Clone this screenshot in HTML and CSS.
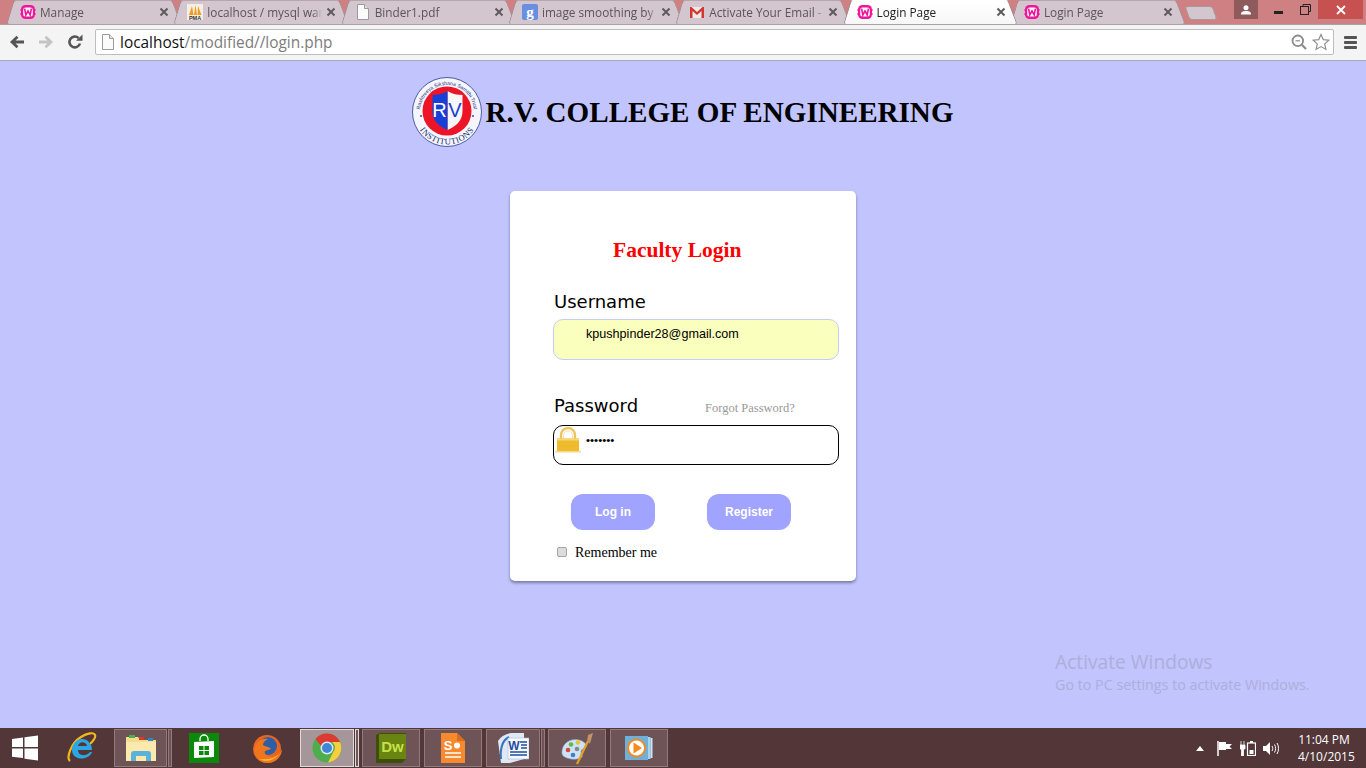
FILE: index.html
```html
<!DOCTYPE html>
<html lang="en">
<head>
<meta charset="utf-8">
<title>Login Page</title>
<link rel="stylesheet" href="styles.css">
</head>
<body>
<svg class="defs" width="0" height="0" aria-hidden="true">
  <symbol id="wamp" viewBox="0 0 16 16">
    <rect x="1" y="1" width="14" height="14" rx="4.5" fill="#f0169a"/>
    <rect x="3.2" y="3.4" width="9.6" height="9.2" rx="2.5" fill="#fff"/>
    <path d="M4.6 4.6 L5.8 11 L8 7 L10.2 11 L11.4 4.6" fill="none" stroke="#f0169a" stroke-width="1.6"/>
    <path d="M0 6h2M0 10h2M14 6h2M14 10h2" stroke="#f0169a" stroke-width="1"/>
  </symbol>
  <symbol id="doc" viewBox="0 0 14 16">
    <path d="M1.5 .5h7l4 4v11h-11z" fill="#fbfbfb" stroke="#9b9b9b"/>
    <path d="M8.5 .5v4h4" fill="#e4e4e4" stroke="#9b9b9b"/>
  </symbol>
  <symbol id="close" viewBox="0 0 10 10">
    <path d="M1.5 1.5l7 7M8.5 1.5l-7 7" stroke="#5f5a5e" stroke-width="2"/>
  </symbol>
</svg>

<div class="browser">
  <header class="tabstrip">
    <div class="tab">
      <svg class="favicon"><use href="#wamp"/></svg>
      <span class="tab-label">Manage</span>
      <svg class="tab-close"><use href="#close"/></svg>
    </div>
    <div class="tab">
      <svg class="favicon" viewBox="0 0 16 16">
        <rect width="16" height="16" fill="#f3efe6"/>
        <path d="M2 11L5 2l1.500 9zM7 11L8.500 1 10 11zM10.500 11L11 2l3.500 9z" fill="#f29a1c"/>
        <text x="8" y="15.600" class="pma-text">PMA</text>
      </svg>
      <span class="tab-label">localhost / mysql wan</span>
      <svg class="tab-close"><use href="#close"/></svg>
    </div>
    <div class="tab">
      <svg class="favicon"><use href="#doc"/></svg>
      <span class="tab-label">Binder1.pdf</span>
      <svg class="tab-close"><use href="#close"/></svg>
    </div>
    <div class="tab">
      <svg class="favicon" viewBox="0 0 16 16">
        <rect width="16" height="16" rx="2" fill="#6a8fe0"/>
        <text x="8" y="13" class="g-text">g</text>
      </svg>
      <span class="tab-label">image smoothing by</span>
      <svg class="tab-close"><use href="#close"/></svg>
    </div>
    <div class="tab">
      <svg class="favicon" viewBox="0 0 16 16">
        <rect x="1" y="3" width="14" height="11" fill="#f0e8e8"/>
        <path d="M1 14V3h1.500L8 8l5.500-5H15v11h-2.500V7L8 11 3.500 7v7z" fill="#d0392e"/>
      </svg>
      <span class="tab-label">Activate Your Email -</span>
      <svg class="tab-close"><use href="#close"/></svg>
    </div>
    <div class="tab tab-active">
      <svg class="favicon"><use href="#wamp"/></svg>
      <span class="tab-label">Login Page</span>
      <svg class="tab-close"><use href="#close"/></svg>
    </div>
    <div class="tab">
      <svg class="favicon"><use href="#wamp"/></svg>
      <span class="tab-label">Login Page</span>
      <svg class="tab-close"><use href="#close"/></svg>
    </div>
    <div class="newtab"></div>
    <div class="window-controls">
      <div class="avatar">
        <svg width="10" height="10" viewBox="0 0 10 10"><circle cx="5" cy="2.800" r="2.500" fill="#fff"/><path d="M0 9.500c0-3 2-3.500 5-3.500s5 .5 5 3.500z" fill="#fff"/></svg>
      </div>
      <div class="win-btn win-min"><span class="min-bar"></span></div>
      <div class="win-btn win-max">
        <svg width="11" height="11" viewBox="0 0 11 11"><path d="M3 2.500V.5h7.500v7H8.500" fill="none" stroke="#222"/><rect x=".5" y="2.500" width="8" height="8" fill="none" stroke="#222"/></svg>
      </div>
      <div class="win-close">
        <svg width="10" height="10" viewBox="0 0 10 10"><path d="M1 1l8 8M9 1l-8 8" stroke="#fff" stroke-width="1.800"/></svg>
      </div>
    </div>
  </header>

  <nav class="toolbar">
    <svg class="nav-icon" viewBox="0 0 16 16"><path d="M15 8H4M8.500 2.800L3 8l5.500 5.200" fill="none" stroke="#555" stroke-width="2.800"/></svg>
    <svg class="nav-icon" viewBox="0 0 16 16"><path d="M1 8h11M7.500 2.800L13 8l-5.500 5.200" fill="none" stroke="#c4c4c4" stroke-width="2.800"/></svg>
    <svg class="nav-icon" viewBox="0 0 16 16"><path d="M13 9.500A5.400 5.400 0 1 1 11.500 4" fill="none" stroke="#555" stroke-width="2.600"/><path d="M9 6.800h6.500V.5z" fill="#555"/></svg>
    <div class="omnibox">
      <svg class="page-icon"><use href="#doc"/></svg>
      <span class="url"><span class="url-host">localhost</span>/modified//login.php</span>
      <svg class="zoom-icon" viewBox="0 0 16 16"><circle cx="6.800" cy="6.800" r="5.300" fill="none" stroke="#8c8c8c" stroke-width="1.800"/><path d="M10.800 10.800L15 15" stroke="#8c8c8c" stroke-width="2.200"/><path d="M4.500 6.800h4.600" stroke="#8c8c8c" stroke-width="1.200"/></svg>
      <svg class="star-icon" viewBox="0 0 18 18"><path d="M9 1.500l2.300 5.100 5.500.6-4.100 3.700 1.200 5.500L9 13.600l-4.900 2.800 1.200-5.500L1.200 7.200l5.500-.6z" fill="#fff" stroke="#8f8f8f" stroke-width="1.200"/></svg>
    </div>
    <div class="menu-icon"><span></span><span></span><span></span></div>
  </nav>

  <main class="page">
    <div class="brand">
      <svg class="logo" viewBox="0 0 70 72">
        <circle cx="35" cy="36" r="34.500" fill="#f4f5fd" stroke="#2c3a8c" stroke-width=".8"/>
        <defs>
          <path id="arc-top" d="M8 36a27 27 0 0 1 54 0"/>
          <path id="arc-bottom" d="M2.500 36a32.500 32.500 0 0 0 65 0"/>
        </defs>
        <text class="logo-top"><textPath href="#arc-top" startOffset="50%">Rashtreeya Sikshana Samithi Trust</textPath></text>
        <text class="logo-bottom"><textPath href="#arc-bottom" startOffset="50%">INSTITUTIONS</textPath></text>
        <circle cx="9" cy="40" r=".9" fill="#2c3a8c"/>
        <circle cx="61" cy="40" r=".9" fill="#2c3a8c"/>
        <circle cx="35" cy="35" r="24.500" fill="#ee1427"/>
        <path d="M35.500 15c5 3 10 4 15 4v16c0 11-8 16-15 19z" fill="#f6f6f6"/>
        <path d="M35.500 15c-5 3-10 4-15 4v16c0 11 8 16 15 19z" fill="#1740d8"/>
        <text x="27.500" y="41" class="logo-r">R</text>
        <text x="43" y="41" class="logo-v">V</text>
      </svg>
      <h1 class="college">R.V. COLLEGE OF ENGINEERING</h1>
    </div>

    <form class="card">
      <h2 class="card-title">Faculty Login</h2>
      <label class="field-label" for="user">Username</label>
      <input class="field field-user" id="user" type="text" value="kpushpinder28@gmail.com">
      <div class="pass-row">
        <label class="field-label" for="pass">Password</label>
        <a class="forgot">Forgot Password?</a>
      </div>
      <div class="pass-wrap">
        <input class="field field-pass" id="pass" type="password" value="1234567">
        <svg class="lock" viewBox="0 0 26 26">
          <path d="M6 12V8a7 7 0 0 1 14 0v4" fill="none" stroke="#eec55d" stroke-width="2.400"/>
          <path d="M8.500 12V8.500a4.500 4.500 0 0 1 9 0V12" fill="none" stroke="#f7e3a6" stroke-width="1"/>
          <rect x="2" y="11.500" width="22" height="12.500" fill="#efbb2c"/>
          <rect x="2" y="11.500" width="22" height="2" fill="#f7d677"/>
          <rect x="0" y="24" width="26" height="1.500" fill="#f5d88a"/>
        </svg>
      </div>
      <div class="actions">
        <button class="btn" type="button">Log in</button>
        <button class="btn" type="button">Register</button>
      </div>
      <label class="remember"><input class="check" type="checkbox"><span>Remember me</span></label>
    </form>

    <div class="watermark">
      <div class="wm-title">Activate Windows</div>
      <div class="wm-sub">Go to PC settings to activate Windows.</div>
    </div>
  </main>

  <footer class="taskbar">
    <div class="slot slot-start">
      <svg width="26" height="26" viewBox="0 0 26 26"><path d="M0 4l11-1.500V12H0zM12.500 2.300L26 .5V12H12.500zM0 13.500h11V23L0 21.700zM12.500 13.500H26v12L12.500 23.700z" fill="#fff"/></svg>
    </div>
    <div class="slot slot-ie">
      <svg width="32" height="34" viewBox="0 0 32 34">
        <path d="M5 30C1 27 6 12 16 6c6-4 13-5 14-2 1 2-2 6-5 9" fill="none" stroke="#f5b81c" stroke-width="2.200"/>
        <path d="M7 19a10 11 0 1 1 20 0H13c0 6 8 7 12 2l2 0c-3 9-20 9-20-2zM13 15h9c-1-5-8-5-9 0z" fill="#2ca7e6" fill-rule="evenodd"/>
      </svg>
    </div>
    <div class="task-btn task-btn-explorer">
      <svg width="32" height="30" viewBox="0 0 32 30">
        <path d="M1 4h12l2 3h16v21H1z" fill="#f5dd8e"/>
        <rect x="4" y="2" width="6" height="3" fill="#4caf50"/><rect x="14" y="4" width="5" height="3" fill="#d9392b"/><rect x="23" y="5" width="5" height="3" fill="#2e86d1"/>
        <rect x="1" y="9" width="30" height="19" fill="#fbe9ae"/>
        <path d="M6 28v-7c0-2 1-3 3-3h14c2 0 3 1 3 3v7h-5v-5H11v5z" fill="#5bb3d9"/>
      </svg>
    </div>
    <div class="task-edge"></div>
    <div class="slot slot-store">
      <svg width="30" height="30" viewBox="0 0 30 30">
        <rect width="30" height="30" fill="#0a8a0a"/>
        <path d="M11 8V6a4 4 0 0 1 8 0v2" fill="none" stroke="#fff" stroke-width="1.300"/>
        <path d="M5 9l20-1v16l-20 1z" fill="#fff"/>
        <path d="M10 13h4.500v4H10zM15.500 13H20v4h-4.500zM10 18h4.500v4H10zM15.500 18H20v4h-4.500z" fill="#0a8a0a"/>
      </svg>
    </div>
    <div class="slot slot-firefox">
      <svg width="32" height="32" viewBox="0 0 32 32">
        <circle cx="16" cy="17" r="14" fill="#e8641f"/>
        <circle cx="17" cy="14" r="9" fill="#2c5fa8"/>
        <path d="M3 18c1 9 8 13 14 13 8 0 14-7 14-14-3 7-9 9-14 7-3-1-4-4-3-5l6-2c-2-3-6-2-8-4 0-3 3-5 5-6C10 6 4 11 3 18z" fill="#f0761d"/>
        <path d="M8 27c5 3 14 3 20-5-5 5-13 6-20 5z" fill="#f9c22e"/>
      </svg>
    </div>
    <div class="task-btn task-btn-chrome">
      <svg width="30" height="30" viewBox="0 0 30 30">
        <circle cx="15" cy="15" r="14.500" fill="#4eae4b"/>
        <path d="M15 .5A14.500 14.500 0 0 1 28 9H15a6.500 6.500 0 0 0-6 4L3.500 6A14.500 14.500 0 0 1 15 .5z" fill="#dc3a32"/>
        <path d="M28 9a14.500 14.500 0 0 1-12 20.500l5.500-11A6.500 6.500 0 0 0 20 9z" fill="#f6ce3e"/>
        <circle cx="15" cy="15" r="6.500" fill="#dfe7ee"/>
        <circle cx="15" cy="15" r="5" fill="#3f86d9"/>
      </svg>
    </div>
    <div class="task-edge task-edge-light"></div>
    <div class="task-btn task-btn-dw">
      <svg width="32" height="30" viewBox="0 0 32 30">
        <path d="M1 2l4-2h26v26l-4 4H1z" fill="#3e4f0a"/>
        <rect x="4" y="1" width="27" height="25" fill="#6a8412"/>
        <text x="17.500" y="19" class="dw-text">Dw</text>
      </svg>
    </div>
    <div class="task-btn task-btn-pres">
      <svg width="24" height="30" viewBox="0 0 24 30">
        <path d="M0 0h16l8 8v22H0z" fill="#f78a2e"/>
        <path d="M16 0l8 8h-8z" fill="#d96f1b"/>
        <text x="7" y="17" class="pres-text">S</text>
        <circle cx="16" cy="12.500" r="3" fill="#fff"/>
        <path d="M4 20h16M4 24h16" stroke="#fff" stroke-width="1.500"/>
      </svg>
    </div>
    <div class="task-btn task-btn-word">
      <svg width="32" height="30" viewBox="0 0 32 30">
        <path d="M1 8C4 3 9 1 14 0h13v26l-14 4H4z" fill="#dfe9f5"/>
        <path d="M4 26C3 15 6 7 12 4" fill="none" stroke="#3a72c0" stroke-width="2"/>
        <rect x="11" y="5" width="21" height="21" fill="#f7f9fc" stroke="#a9bcd6" stroke-width=".6"/>
        <text x="17" y="17" class="word-text">W</text>
        <path d="M23 9h7M24 12h6M24 15h6M13 19h17M13 22h17" stroke="#1f4fa0" stroke-width="1.400"/>
      </svg>
    </div>
    <div class="task-edge"></div>
    <div class="task-btn task-btn-paint">
      <svg width="34" height="34" viewBox="0 0 34 34">
        <path d="M2 20C3 10 14 6 22 10c6 3 5 7 1 8-3 1-2 5-1 6 2 3-6 5-11 4C5 27 1 25 2 20z" fill="#cfe2f2" stroke="#7fa3c7" stroke-width=".6"/>
        <circle cx="8" cy="19" r="2.300" fill="#d9463a"/><circle cx="11" cy="13.500" r="2.300" fill="#62b74a"/>
        <circle cx="18" cy="11.500" r="2.300" fill="#e5c53b"/><circle cx="13" cy="24" r="2.300" fill="#3f7fcf"/><circle cx="17" cy="18" r="2.300" fill="#7d8b99"/>
        <path d="M17 33L28 10" stroke="#e5a21f" stroke-width="2.200"/>
        <path d="M27 11l3 1.500L33 2l-5 2z" fill="#c29468"/>
      </svg>
    </div>
    <div class="task-btn task-btn-media">
      <svg width="28" height="28" viewBox="0 0 28 28">
        <rect x="0" y="2" width="23" height="24" fill="#6db0dc"/>
        <rect x="23" y="3" width="2.500" height="22" fill="#a6d3ef"/><rect x="25.500" y="4" width="2" height="20" fill="#c9e5f6"/>
        <circle cx="11.500" cy="14" r="9.500" fill="#f58a1f"/><circle cx="11.500" cy="14" r="7.500" fill="#fff"/>
        <path d="M8.500 8.500L17 14l-8.500 5.500z" fill="#f58a1f"/>
      </svg>
    </div>
    <div class="tray">
      <svg class="tray-arrow" width="8" height="5" viewBox="0 0 8 5"><path d="M4 0l4 5H0z" fill="#fff"/></svg>
      <svg width="16" height="15" viewBox="0 0 16 15"><path d="M1 0v15" stroke="#fff" stroke-width="1.500"/><path d="M2 1h7v2h6l-2.500 2.500L15 8H9v1H2z" fill="#fff"/></svg>
      <svg width="16" height="15" viewBox="0 0 16 15"><path d="M1 0v4M4 0v4M0 4h5v4H3.500v7h-2V8H0z" fill="#fff" stroke="#fff" stroke-width=".8"/><rect x="7.500" y="2" width="8" height="12.500" fill="none" stroke="#fff" stroke-width="1.200"/><rect x="10" y="0" width="3" height="2" fill="#fff"/><rect x="9.500" y="9" width="4" height="4" fill="#fff"/></svg>
      <svg width="16" height="15" viewBox="0 0 16 15"><path d="M0 5h3l4-4v13l-4-4H0z" fill="#fff"/><path d="M9 5c1 1.500 1 3.500 0 5M11.500 3.500c1.500 2.500 1.500 5.500 0 8M14 2c2 3 2 8 0 11" fill="none" stroke="#fff"/></svg>
      <div class="clock"><div>11:04 PM</div><div>4/10/2015</div></div>
    </div>
  </footer>
</div>
</body>
</html>
```
FILE: styles.css
```css
* { box-sizing: border-box; }
html, body { margin: 0; padding: 0; width: 1366px; height: 768px; overflow: hidden; }
.defs { position: absolute; }
.browser { width: 1366px; height: 768px; display: flex; flex-direction: column; font-family: "Open Sans", sans-serif; }

/* tab strip */
.tabstrip { height: 25px; flex: none; display: flex; align-items: flex-end; padding-left: 7px; background: #cf8083; position: relative; z-index: 0; border-bottom: 1px solid #a8a0a4; }
.tab { width: 175px; height: 24px; margin-right: -7.7px; flex: none; position: relative; display: flex; align-items: center; padding-left: 13px; color: #5c5458; font-size: 11.8px; }
.tab::before, .tab::after { content: ""; position: absolute; top: 0; bottom: 0; width: 55%; background: #d3c6ce; border-top: 1px solid #b8a6ac; z-index: -1; }
.tab::before { left: 3px; transform: skewX(-17deg); border-left: 1px solid #9c8d93; border-radius: 3px 0 0 3px; }
.tab::after { right: 5px; transform: skewX(21deg); border-right: 1px solid #9c8d93; border-radius: 0 3px 3px 0; }
.tab-active { color: #222; z-index: 2; }
.tab-active::before, .tab-active::after { background: linear-gradient(#fff, #f7f7f7); border-top-color: #fff; }
.favicon { width: 16px; height: 16px; flex: none; margin-right: 4px; }
.tab-label { width: 115px; flex: none; white-space: nowrap; overflow: hidden; -webkit-mask-image: linear-gradient(to right, #000 92%, transparent); mask-image: linear-gradient(to right, #000 92%, transparent); }
.tab-close { width: 10px; height: 10px; flex: none; margin-left: 4px; }
.pma-text { font: bold 5.500px "Liberation Sans", sans-serif; text-anchor: middle; fill: #333; }
.g-text { font: bold 15px "Liberation Serif", serif; text-anchor: middle; fill: #fff; }
.newtab { width: 28px; height: 14px; margin: 0 0 4px 9px; flex: none; background: #d3c6ce; border: 1px solid #a99; border-radius: 3px; transform: skewX(20deg); }
.window-controls { margin-left: auto; align-self: flex-start; display: flex; align-items: flex-start; height: 19px; padding-right: 3px; }
.avatar { width: 24px; height: 19px; background: #8e5a5c; display: flex; align-items: center; justify-content: center; }
.win-btn { height: 19px; display: flex; align-items: center; justify-content: center; }
.win-min { width: 16px; margin-left: 12px; }
.min-bar { width: 9px; height: 3px; background: #222; margin-top: 5px; }
.win-max { width: 14px; margin-left: 12px; }
.win-close { width: 45px; height: 19px; margin-left: 6px; background: #c75050; display: flex; align-items: center; justify-content: center; }

/* toolbar */
.toolbar { height: 36px; flex: none; display: flex; align-items: center; padding: 0 0 1px 9px; background: #f4f4f4; border-bottom: 1px solid #a9a9b5; position: relative; z-index: 1; }
.nav-icon { width: 16px; height: 16px; flex: none; margin-right: 13px; }
.omnibox { width: 1239px; height: 26px; margin-left: -1px; flex: none; display: flex; align-items: center; background: #fff; border: 1px solid #bdbdbd; border-radius: 2px; padding: 0 3px 0 5px; }
.page-icon { width: 14px; height: 16px; flex: none; margin-right: 5px; }
.url { font-size: 15.4px; color: #7c7c7c; white-space: nowrap; flex: 1; }
.url-host { color: #111; }
.zoom-icon { width: 16px; height: 16px; flex: none; margin-right: 5px; }
.star-icon { width: 18px; height: 18px; flex: none; }
.menu-icon { width: 13px; margin-left: 10px; display: flex; flex-direction: column; gap: 2px; }
.menu-icon span { height: 3px; background: #555; border-radius: 1px; }

/* page */
.page { flex: 1; background: #c1c4fd; position: relative; display: flex; flex-direction: column; align-items: center; padding-top: 15px; }
.brand { display: flex; align-items: center; width: 542px; margin-left: -1px; height: 72px; }
.logo { width: 70px; height: 72px; flex: none; margin-right: 4px; }
.logo-top { font: 5.100px "Liberation Sans", sans-serif; fill: #22306e; text-anchor: middle; }
.logo-bottom { font: 8.500px "Liberation Serif", serif; fill: #22306e; text-anchor: middle; letter-spacing: .5px; }
.logo-r, .logo-v { font: 20px "Liberation Sans", sans-serif; text-anchor: middle; }
.logo-r { fill: #fff; }
.logo-v { fill: #1740d8; }
.college { margin: 0; font: bold 29.1px "Liberation Serif", serif; color: #000; white-space: nowrap; }

.card { width: 346px; height: 390px; margin-top: 43px; background: #fff; border-radius: 5px; box-shadow: 0 2px 3px rgba(60,60,90,.55); padding: 46px 17px 0 43px; display: flex; flex-direction: column; }
.card-title { margin: 0 0 0 60px; font: bold 21.5px/26px "Liberation Serif", serif; color: #f00; white-space: nowrap; }
.field-label { font: 18px/20px "DejaVu Sans", sans-serif; color: #000; display: block; padding-left: 1px; }
.card-title + .field-label { margin-top: 29px; }
.field { display: block; width: 286px; height: 41px; border-radius: 10px; padding: 0 0 11px 32px; font: 11.6px "Liberation Sans", sans-serif; outline: none; color: #000; }
.field-user { margin-top: 7px; background: #faffbd; border: 1px solid #c6cdf6; font-size: 12.6px; }
.pass-row { display: flex; align-items: flex-end; margin-top: 36px; }
.forgot { font: 12.5px/16px "Liberation Serif", serif; color: #999; margin-left: 67px; }
.pass-wrap { position: relative; margin-top: 9px; }
.field-pass { height: 40px; background: #fff; border: 1px solid #000; }
.lock { position: absolute; left: 2px; top: 2px; width: 26px; height: 26px; }
.actions { display: flex; gap: 52px; margin: 29px 0 0 18px; }
.btn { width: 84px; height: 36px; border: 0; border-radius: 12px; background: #a0a4ff; color: #fff; font: bold 12px "Liberation Sans", sans-serif; padding: 0; }
.remember { display: flex; align-items: center; margin: 14px 0 0 4px; font: 14px/18px "Liberation Serif", serif; color: #000; }
.check { appearance: none; width: 10px; height: 10px; margin: 0 8px 2px 0; background: #dcdcdc; border: 1px solid #a5a5a5; border-radius: 2px; }

.watermark { position: absolute; left: 1055px; top: 589px; color: #adaedb; white-space: nowrap; }
.wm-title { font-size: 19.2px; line-height: 24px; }
.wm-sub { font-size: 14.3px; line-height: 22px; }

/* taskbar */
.taskbar { height: 40px; flex: none; background: #523638; display: flex; align-items: center; color: #fff; }
.slot, .task-btn { flex: none; height: 38px; display: flex; align-items: center; justify-content: center; }
.slot-start { width: 50px; }
.slot-ie { width: 62px; }
.task-btn { border: 1px solid #917a7c; background: #6e5456; }
.task-btn-explorer { width: 53px; margin-left: 2px; }
.task-edge { width: 4px; height: 38px; flex: none; margin-left: 1px; border: 1px solid #917a7c; background: #6e5456; }
.slot-store { width: 30px; height: 30px; margin: 0 32px 0 17px; }
.slot-firefox { width: 32px; margin-right: 17px; }
.task-btn-chrome { width: 54px; background: #a59799; border-color: #e0dbdb; }
.task-edge-light { border-color: #e0dbdb; margin-right: 3px; }
.task-btn-dw { width: 58px; }
.task-btn-pres { width: 58px; margin-left: 4px; }
.task-btn-word { width: 54px; margin-left: 4px; }
.task-btn-paint { width: 58px; margin-left: 3px; }
.task-btn-media { width: 58px; margin-left: 4px; }
.dw-text { font: bold 15px "Liberation Sans", sans-serif; fill: #c6e04a; text-anchor: middle; }
.pres-text { font: bold 13px "Liberation Sans", sans-serif; fill: #fff; text-anchor: middle; }
.word-text { font: bold 12px "Liberation Sans", sans-serif; fill: #1f4fa0; text-anchor: middle; }
.tray { margin-left: auto; display: flex; align-items: center; gap: 7px; padding-right: 16px; }
.tray-arrow { margin-right: 6px; }
.clock { margin-left: 12px; font-size: 12px; line-height: 17px; text-align: center; width: 52px; white-space: nowrap; }
```
